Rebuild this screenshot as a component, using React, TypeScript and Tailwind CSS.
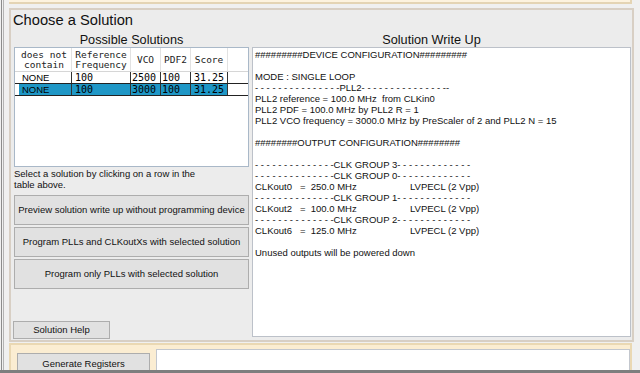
import React from "react";

const mono = "font-['DejaVu_Sans_Mono','Liberation_Mono',monospace]";

const writeUp: (string | [string, string])[] = [
  "#########DEVICE CONFIGURATION#########",
  "",
  "MODE : SINGLE LOOP",
  "- - - - - - - - - - - - - - -PLL2- - - - - - - - - - - - - - --",
  "PLL2 reference = 100.0 MHz  from CLKin0",
  "PLL2 PDF = 100.0 MHz by PLL2 R = 1",
  "PLL2 VCO frequency = 3000.0 MHz by PreScaler of 2 and PLL2 N = 15",
  "",
  "########OUTPUT CONFIGURATION########",
  "",
  "- - - - - - - - - - - - - -CLK GROUP 3- - - - - - - - - - - - -",
  "- - - - - - - - - - - - - -CLK GROUP 0- - - - - - - - - - - - -",
  ["CLKout0   =  250.0 MHz", "LVPECL (2 Vpp)"],
  "- - - - - - - - - - - - - -CLK GROUP 1- - - - - - - - - - - - -",
  ["CLKout2   =  100.0 MHz", "LVPECL (2 Vpp)"],
  "- - - - - - - - - - - - - -CLK GROUP 2- - - - - - - - - - - - -",
  ["CLKout6   =  125.0 MHz", "LVPECL (2 Vpp)"],
  "",
  "Unused outputs will be powered down",
];

const rows = [
  { ref: "100", vco: "2500", pdf: "100", score: "31.25", selected: false },
  { ref: "100", vco: "3000", pdf: "100", score: "31.25", selected: true },
];

function WinButton({ label, className = "" }: { label: string; className?: string }) {
  return (
    <button
      type="button"
      className={`flex items-center justify-center whitespace-nowrap border border-[#adadad] bg-[#e1e1e1] text-[9.5px] text-[#111] ${className}`}
    >
      {label}
    </button>
  );
}

export default function App() {
  return (
    <div className="flex h-[373px] w-[640px] overflow-hidden bg-[#f0f0f0] font-['Liberation_Sans',Arial,sans-serif] text-black">
      {/* left window edge */}
      <div className="flex w-[9px] shrink-0">
        <div className="ml-[1px] w-px bg-[#8c8c8c]" />
        <div className="ml-px w-px bg-[#b4b4b4]" />
      </div>

      <div className="flex w-[625px] shrink-0 flex-col">
        {/* top cream strip */}
        <div className="h-[4px] w-[623px] border-b-2 border-r-2 border-[#e4d4b4] bg-[#fdf3df]" />

        {/* main panel */}
        <div className="mt-[4px] flex h-[334px] w-[625px] flex-col border-2 border-[#d8cfc4] bg-[#ececec]">
          <h1 className="pl-[2px] pt-[1px] text-[14.7px] leading-[19px] text-[#111]">Choose a Solution</h1>

          <div className="mt-[3px] flex flex-1 gap-[3px] pl-[3px]">
            {/* left column */}
            <div className="flex w-[235px] flex-col">
              <div className="h-[14px] text-center text-[12.7px] leading-[14px] text-[#111]">Possible Solutions</div>

              <div className="h-[120px] border border-[#a9b8c8] bg-white">
                {/* header */}
                <div className={`flex h-[24px] border-b border-[#d6d6d6] text-[9.5px] leading-[10px] text-[#222] ${mono}`}>
                  <div className="flex w-[57px] flex-col items-center justify-center border-r border-[#e2e2e2] pl-[2px]">
                    <span>does not</span>
                    <span>contain</span>
                  </div>
                  <div className="flex w-[59px] flex-col items-center justify-center border-r border-[#e2e2e2]">
                    <span>Reference</span>
                    <span>Frequency</span>
                  </div>
                  <div className="flex w-[30px] items-center justify-center border-r border-[#e2e2e2]">VCO</div>
                  <div className="flex w-[30px] items-center justify-center border-r border-[#e2e2e2]">PDF2</div>
                  <div className="flex w-[37px] items-center justify-center border-r border-[#e2e2e2]">Score</div>
                  <div className="flex-1" />
                </div>

                {rows.map((r, i) => (
                  <div key={i} className="flex h-[12px] border-b border-[#222] text-[10px] leading-[11px]">
                    <div className="w-[4px] bg-white" />
                    <div className={`flex flex-1 ${r.selected ? "bg-[#1f97c6]" : "bg-white"}`}>
                      <div className="w-[53px] border-r border-[#333] pl-[3px] text-[9.5px]">NONE</div>
                      <div className={`w-[59px] border-r border-[#333] pl-[3px] ${mono}`}>{r.ref}</div>
                      <div className={`w-[30px] border-r border-[#333] pl-[1px] ${mono}`}>{r.vco}</div>
                      <div className={`w-[30px] border-r border-[#333] pl-[1px] ${mono}`}>{r.pdf}</div>
                      <div className={`w-[37px] border-r border-[#333] pl-[3px] ${mono}`}>{r.score}</div>
                      <div className="flex-1 bg-white" />
                    </div>
                  </div>
                ))}
              </div>

              <p className="mt-[1px] text-[9.5px] leading-[11px] text-[#111]">
                Select a solution by clicking on a row in the
                <br />
                table above.
              </p>

              <div className="mt-[5px] flex flex-col gap-[2px]">
                <WinButton label="Preview solution write up without programming device" className="h-[30px] w-[235px]" />
                <WinButton label="Program PLLs and CLKoutXs with selected solution" className="h-[30px] w-[235px]" />
                <WinButton label="Program only PLLs with selected solution" className="h-[30px] w-[235px]" />
              </div>

              <div className="flex-1" />
              <WinButton label="Solution Help" className="mb-[1px] ml-[-1px] h-[18px] w-[97px]" />
            </div>

            {/* right column */}
            <div className="flex w-[379px] flex-col">
              <div className="h-[14px] pr-[20px] text-center text-[12.7px] leading-[14px] text-[#111]">Solution Write Up</div>
              <div className="h-[290px] border border-[#bcc1c9] bg-white pl-[2px] pt-[1px] text-[9.5px] leading-[11px] text-[#111]">
                {writeUp.map((line, i) =>
                  Array.isArray(line) ? (
                    <div key={i} className="flex h-[11px] whitespace-pre">
                      <span className="w-[155px]">{line[0]}</span>
                      <span>{line[1]}</span>
                    </div>
                  ) : (
                    <div key={i} className="h-[11px] whitespace-pre">
                      {line}
                    </div>
                  )
                )}
              </div>
            </div>
          </div>
        </div>

        {/* bottom cream panel */}
        <div className="mt-[1px] flex h-[28px] w-[623px] gap-[6px] overflow-hidden border-x-2 border-t-2 border-[#ead8b3] bg-[#fbedd2] pl-[6px] pt-[4px]">
          <button
            type="button"
            className="mt-[4px] flex h-[36px] w-[133px] shrink-0 flex-col items-center border border-[#adadad] bg-[#e1e1e1] pt-[4px] text-[9.5px] leading-[11px] text-[#111]"
          >
            <span>Generate Registers</span>
            <span>to Copy/Paste</span>
          </button>
          <div className="h-[30px] flex-1 border border-[#c3c7ce] bg-white" />
        </div>
      </div>

      <div className="flex-1" />
      {/* bottom dark line */}
      <div className="pointer-events-none fixed bottom-0 left-0 h-[3px] w-[640px] bg-[#7e7e7e]" />
    </div>
  );
}
